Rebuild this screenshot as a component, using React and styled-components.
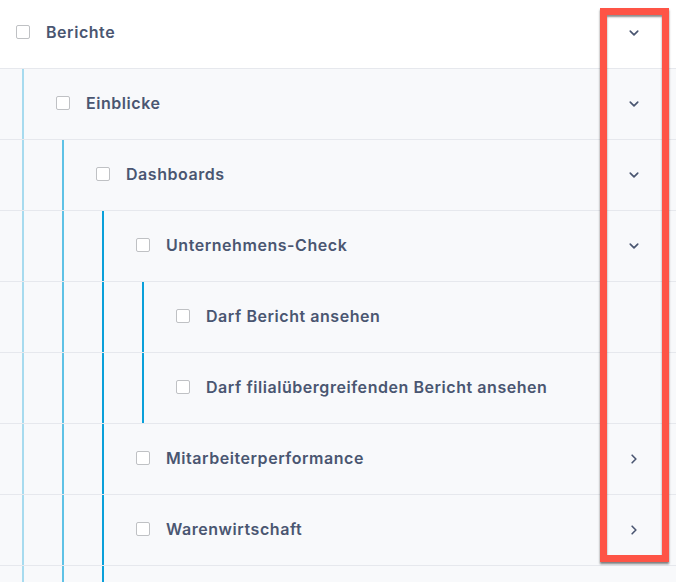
import React from "react";
import styled, { createGlobalStyle } from "styled-components";

const Global = createGlobalStyle`
  html, body {
    margin: 0;
    padding: 0;
    overflow: hidden;
    background: #ffffff;
  }
  body {
    font-family: Inter, "Noto Sans", sans-serif;
  }
`;

const guideColors = ["#a7dbef", "#5fc2e6", "#0aa0da", "#0aa0da"];

const Page = styled.div`
  position: relative;
  width: 676px;
  height: 582px;
  overflow: hidden;
`;

const Tree = styled.div`
  margin-top: -2px;
  display: flex;
  flex-direction: column;
`;

const Row = styled.div`
  display: flex;
  align-items: stretch;
  height: 70px;
  border-bottom: 1px solid #e6e8ed;
  background: ${(p) => (p.$depth === 0 ? "#ffffff" : "#f8f9fb")};
`;

const Guide = styled.div`
  flex: none;
  margin-left: 22px;
  width: 16px;
  border-left: 2px solid ${(p) => p.$color};
`;

const Content = styled.div`
  flex: 1;
  display: flex;
  align-items: center;
  padding-left: 16px;
  padding-right: 33px;
  padding-bottom: 2px;
`;

const Checkbox = styled.span`
  flex: none;
  width: 12px;
  height: 12px;
  border: 1px solid #bfc1c4;
  border-radius: 2px;
  background: #ffffff;
  margin-right: 16px;
`;

const Label = styled.span`
  font-size: 16px;
  font-weight: 600;
  color: #4a5671;
  letter-spacing: 0.55px;
  white-space: nowrap;
`;

const Toggle = styled.span`
  margin-left: auto;
  width: 18px;
  height: 18px;
  display: flex;
  align-items: center;
  justify-content: center;
  color: #4a5671;
  margin-top: 1px;
`;

const Annotation = styled.div`
  position: absolute;
  left: 600px;
  top: 8px;
  width: 55px;
  height: 540px;
  border: 7px solid #fe5446;
  box-shadow: 0 2px 2px rgba(0, 0, 0, 0.5), inset 0 2px 2px rgba(0, 0, 0, 0.45);
`;

const ChevronDown = () => (
  <svg width="18" height="18" viewBox="0 0 24 24" fill="none" stroke="currentColor" strokeWidth="2.2" strokeLinecap="round" strokeLinejoin="round">
    <path d="m7 9.5 5 5 5-5" />
  </svg>
);

const ChevronRight = () => (
  <svg width="18" height="18" viewBox="0 0 24 24" fill="none" stroke="currentColor" strokeWidth="2.2" strokeLinecap="round" strokeLinejoin="round">
    <path d="m9.5 7 5 5-5 5" />
  </svg>
);

const items = [
  { label: "Berichte", depth: 0, toggle: "down" },
  { label: "Einblicke", depth: 1, toggle: "down" },
  { label: "Dashboards", depth: 2, toggle: "down" },
  { label: "Unternehmens-Check", depth: 3, toggle: "down" },
  { label: "Darf Bericht ansehen", depth: 4 },
  { label: "Darf filialübergreifenden Bericht ansehen", depth: 4 },
  { label: "Mitarbeiterperformance", depth: 3, toggle: "right" },
  { label: "Warenwirtschaft", depth: 3, toggle: "right" },
  { depth: 3 },
];

export default function App() {
  return (
    <Page>
      <Global />
      <Tree>
        {items.map((it, i) => (
          <Row key={i} $depth={it.depth}>
            {Array.from({ length: it.depth }).map((_, g) => (
              <Guide key={g} $color={guideColors[g]} />
            ))}
            {it.label && (
              <Content>
                <Checkbox />
                <Label>{it.label}</Label>
                {it.toggle && (
                  <Toggle>{it.toggle === "down" ? <ChevronDown /> : <ChevronRight />}</Toggle>
                )}
              </Content>
            )}
          </Row>
        ))}
      </Tree>
      <Annotation />
    </Page>
  );
}
